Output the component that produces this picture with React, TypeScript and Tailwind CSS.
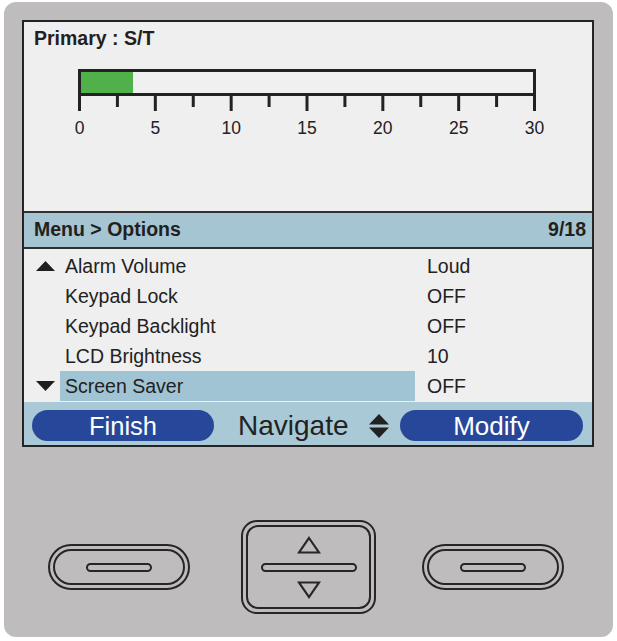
import React from "react";

const FONT = { fontFamily: '"Liberation Sans", Arial, Helvetica, sans-serif' };

const rows = [
  { label: "Alarm Volume", value: "Loud", icon: "up" },
  { label: "Keypad Lock", value: "OFF" },
  { label: "Keypad Backlight", value: "OFF" },
  { label: "LCD Brightness", value: "10" },
  { label: "Screen Saver", value: "OFF", icon: "down", selected: true },
];

const labels = ["0", "5", "10", "15", "20", "25", "30"];

function Ruler() {
  const start = 1.5;
  const step = (458 - 3) / 12;
  return (
    <div className="w-[458px]">
      <div className="w-[458px] h-[27px] border-[3px] border-[#222] bg-[#f0f0f0]">
        <div className="h-full w-[52px] bg-[#50b04a]" />
      </div>
      <svg width="458" height="16" className="block">
        {Array.from({ length: 13 }).map((_, i) => {
          const x = start + i * step;
          const major = i % 2 === 0;
          return (
            <line
              key={i}
              x1={x}
              x2={x}
              y1={0}
              y2={major ? 15 : 11}
              stroke="#222"
              strokeWidth={3}
            />
          );
        })}
      </svg>
      <div className="relative h-[22px] mt-[6px]">
        {labels.map((l, i) => (
          <span
            key={l}
            className="absolute top-0 -translate-x-1/2 text-[17.5px] leading-[20px] text-[#222]"
            style={{ left: start + i * 2 * step }}
          >
            {l}
          </span>
        ))}
      </div>
    </div>
  );
}

function SolidTri({ dir }: { dir: "up" | "down" }) {
  return (
    <svg width="19" height="10" viewBox="0 0 19 10" className="block">
      {dir === "up" ? (
        <polygon points="0,10 19,10 9.5,0" fill="#1e1e1e" />
      ) : (
        <polygon points="0,0 19,0 9.5,10" fill="#1e1e1e" />
      )}
    </svg>
  );
}

function Pill() {
  return (
    <div className="w-[142px] h-[46px] rounded-full border-2 border-[#262626] p-[3px] flex">
      <div className="flex-1 rounded-full border-2 border-[#262626] flex items-center justify-center">
        <div className="w-[66px] h-[9px] rounded-full border-2 border-[#262626]" />
      </div>
    </div>
  );
}

function CenterKey() {
  return (
    <div className="w-[135px] h-[94px] rounded-[16px] border-2 border-[#262626] p-[3px] flex">
      <div className="flex-1 rounded-[12px] border-2 border-[#262626] flex flex-col items-center justify-center gap-[9px]">
        <svg width="24" height="18" viewBox="0 0 24 18" className="block">
          <polygon points="12,2 22,16.5 2,16.5" fill="none" stroke="#262626" strokeWidth="2.2" strokeLinejoin="miter" />
        </svg>
        <div className="w-[96px] h-[9px] rounded-full border-2 border-[#262626]" />
        <svg width="24" height="18" viewBox="0 0 24 18" className="block">
          <polygon points="2,1.5 22,1.5 12,16" fill="none" stroke="#262626" strokeWidth="2.2" strokeLinejoin="miter" />
        </svg>
      </div>
    </div>
  );
}

export default function App() {
  return (
    <div className="w-[617px] h-[641px] bg-white pl-[4px] pt-[2px]" style={FONT}>
      <div className="w-[609px] h-[635px] rounded-[12px] bg-[#bebcbd] pl-[18px] pt-[18px]">
        {/* Screen */}
        <div className="w-[572px] h-[427px] border-2 border-[#242424] bg-[#efefef] flex flex-col text-[#222]">
          {/* top area */}
          <div className="h-[189px] shrink-0">
            <div className="pl-[10px] pt-[5px] text-[19.5px] leading-[22px] font-bold text-[#231f20]">
              Primary : S/T
            </div>
            <div className="pl-[54px] pt-[20px]">
              <Ruler />
            </div>
          </div>
          {/* header */}
          <div className="h-[38px] shrink-0 border-t-2 border-b-2 border-[#303030] bg-[#a5c5d2] flex items-center justify-between pl-[10px] pr-[6px]">
            <span className="text-[19.5px] font-bold text-[#231f20]">Menu &gt; Options</span>
            <span className="text-[19.5px] font-bold text-[#231f20]">9/18</span>
          </div>
          {/* list */}
          <div className="h-[153px] shrink-0 pt-[2px]">
            {rows.map((r) => (
              <div key={r.label} className="h-[30px] flex items-center">
                <div className="w-[36px] flex justify-start pl-[12px]">
                  {r.icon ? <SolidTri dir={r.icon as "up" | "down"} /> : null}
                </div>
                <div
                  className={
                    "w-[355px] h-[30px] flex items-center pl-[5px] " +
                    (r.selected ? "bg-[#a0c4d3]" : "")
                  }
                >
                  <span className="text-[19.5px] leading-[22px] text-[#222]">{r.label}</span>
                </div>
                <span className="ml-[12px] text-[19.5px] leading-[22px] text-[#222]">{r.value}</span>
              </div>
            ))}
          </div>
          {/* footer */}
          <div className="flex-1 bg-[#a9c9d6] flex items-start pt-[8px] pl-[8px]">
            <div className="w-[182px] h-[31px] rounded-full bg-[#27489a] flex items-center justify-center text-white text-[25.5px] leading-[28px]">
              Finish
            </div>
            <div className="w-[186px] h-[31px] flex items-center justify-between pl-[24px] pr-[11px]">
              <span className="text-[28px] leading-[30px] text-[#222]">Navigate</span>
              <svg width="20" height="24" viewBox="0 0 20 24" className="block">
                <polygon points="0,10.5 20,10.5 10,0" fill="#222" />
                <polygon points="0,13.5 20,13.5 10,24" fill="#222" />
              </svg>
            </div>
            <div className="w-[183px] h-[31px] rounded-full bg-[#27489a] flex items-center justify-center text-white text-[26px] leading-[28px]">
              Modify
            </div>
          </div>
        </div>
        {/* physical keys */}
        <div className="flex items-center mt-[73px] pl-[26px]">
          <Pill />
          <div className="ml-[51px]">
            <CenterKey />
          </div>
          <div className="ml-[46px]">
            <Pill />
          </div>
        </div>
      </div>
    </div>
  );
}
